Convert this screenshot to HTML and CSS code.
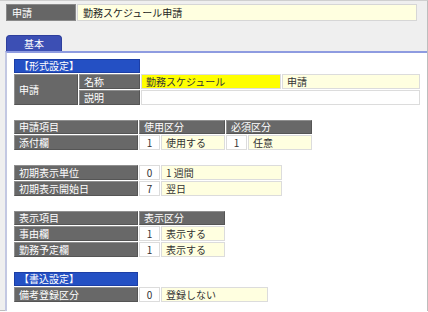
FILE: index.html
```html
<!DOCTYPE html>
<html lang="ja">
<head>
  <meta charset="UTF-8">
  <title>申請</title>
  <link rel="stylesheet" href="styles.css">
</head>
<body>
  <div class="page">
    <div class="title-row">
      <div class="title-label">申請</div>
      <div class="title-value">勤務スケジュール申請</div>
    </div>

    <div class="tabs">
      <div class="tab active">基本</div>
    </div>

    <div class="panel">
      <!-- 形式設定 -->
      <table class="grid">
        <tr class="hdr">
          <th class="sec" colspan="2">【形式設定】</th>
        </tr>
        <tr>
          <th class="lbl w-app" rowspan="2">申請</th>
          <th class="lbl w-sub">名称</th>
          <td class="val hl w-name">勤務スケジュール</td>
          <td class="val w-kind">申請</td>
        </tr>
        <tr>
          <th class="lbl">説明</th>
          <td class="blank" colspan="2"></td>
        </tr>
      </table>

      <table class="grid">
        <tr class="hdr">
          <th class="lbl w-label">申請項目</th>
          <th class="lbl" colspan="2">使用区分</th>
          <th class="lbl" colspan="2">必須区分</th>
        </tr>
        <tr>
          <th class="lbl">添付欄</th>
          <td class="num">1</td>
          <td class="val w-use">使用する</td>
          <td class="num">1</td>
          <td class="val w-req">任意</td>
        </tr>
      </table>

      <table class="grid">
        <tr>
          <th class="lbl w-label">初期表示単位</th>
          <td class="num">0</td>
          <td class="val w-unit">1 週間</td>
        </tr>
        <tr>
          <th class="lbl">初期表示開始日</th>
          <td class="num">7</td>
          <td class="val">翌日</td>
        </tr>
      </table>

      <table class="grid">
        <tr class="hdr">
          <th class="lbl w-label">表示項目</th>
          <th class="lbl" colspan="2">表示区分</th>
        </tr>
        <tr>
          <th class="lbl">事由欄</th>
          <td class="num">1</td>
          <td class="val w-use">表示する</td>
        </tr>
        <tr>
          <th class="lbl">勤務予定欄</th>
          <td class="num">1</td>
          <td class="val">表示する</td>
        </tr>
      </table>

      <table class="grid">
        <tr class="hdr">
          <th class="sec w-label">【書込設定】</th>
        </tr>
        <tr>
          <th class="lbl w-label">備考登録区分</th>
          <td class="num">0</td>
          <td class="val w-memo">登録しない</td>
        </tr>
      </table>
    </div>
  </div>
</body>
</html>
```

FILE: styles.css
```css
body {
  margin: 0;
  font-family: "Noto Sans CJK JP", "Noto Sans", sans-serif;
  font-size: 10px;
  color: #333;
  background: #fff;
}

.page {
  height: 311px;
  background: #efefef;
  border-top: 1px solid #cfcfcf;
  border-right: 1px solid #bdbdbd;
  border-bottom: 1px solid #bdbdbd;
  box-sizing: border-box;
  display: flex;
  flex-direction: column;
}

.title-row {
  display: flex;
  margin: 3px 10px 0 6px;
  height: 17px;
}

.title-label {
  width: 63px;
  padding-left: 5px;
  background: #666;
  border: 1px solid #8a8a8a;
  color: #fff;
  line-height: 15px;
}

.title-value {
  flex: 1;
  margin-left: 1px;
  padding-left: 5px;
  background: #ffffe0;
  border: 1px solid #d6d6d6;
  line-height: 15px;
  color: #222;
}

.tabs {
  display: flex;
  margin: 14px 0 0 6px;
}

.tab {
  width: 54px;
  height: 15px;
  line-height: 15px;
  text-align: center;
  color: #fff;
  background: #3c4fb4;
  border: 1px solid #2e3f9c;
  border-bottom: none;
  border-radius: 4px 4px 0 0;
}

.panel {
  flex: 1;
  margin-left: 5px;
  background: #fff;
  border-top: 2px solid #8e9be0;
  border-left: 2px solid #c3c8e2;
  padding: 5px 0 0 6px;
}

.grid {
  border-collapse: separate;
  border-spacing: 1px;
  margin-bottom: 13px;
}

.grid th,
.grid td {
  height: 13px;
  padding: 0 0 0 4px;
  font-weight: normal;
  text-align: left;
  white-space: nowrap;
  line-height: 13px;
}

.grid .hdr th {
  height: 12px;
  line-height: 12px;
}

.sec {
  background: #2450c4;
  color: #fff;
  border: 1px solid #1c3ea6;
}

.lbl {
  background: #686868;
  color: #fff;
  border: 1px solid #8f8f8f;
  border-right-color: #555;
  border-bottom-color: #555;
}

.val {
  background: #ffffe0;
  border: 1px solid #dcdcdc;
  padding-left: 5px;
}

.hl {
  background: #ffff00;
}

.num {
  width: 19px;
  background: #fff;
  border: 1px solid #dcdcdc;
  text-align: center !important;
  padding: 0 !important;
}

.blank {
  background: #fff;
  border: 1px solid #dcdcdc;
}

.w-app { width: 58px; }
.w-sub { width: 55px; }
.w-name { width: 134px; }
.w-kind { width: 132px; }
.w-label { width: 118px; }
.w-use { width: 58px; }
.w-req { width: 58px; }
.w-unit { width: 115px; }
.w-memo { width: 101px; }
```
